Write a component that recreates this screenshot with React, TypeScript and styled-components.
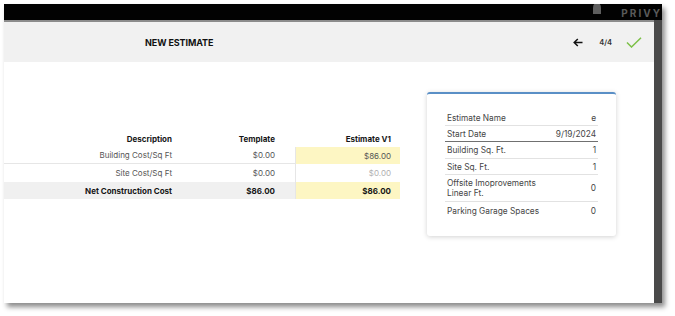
import React from "react";
import styled, { createGlobalStyle } from "styled-components";

const GlobalStyle = createGlobalStyle`
  body {
    margin: 0;
    background: #ffffff;
    font-family: "Inter", "Liberation Sans", sans-serif;
  }
`;

const Page = styled.div`
  padding: 4px 0 0 4px;
  width: 675px;
  height: 316px;
  box-sizing: border-box;
`;

const Frame = styled.div`
  width: 658px;
  height: 299px;
  display: flex;
  flex-direction: column;
  overflow: hidden;
  background: #ffffff;
  box-shadow: 3px 4px 5px rgba(0, 0, 0, 0.45);
`;

const TopBar = styled.div`
  height: 16px;
  flex-shrink: 0;
  background: #020202;
  display: flex;
  align-items: flex-start;
  justify-content: flex-end;
  gap: 19px;
  overflow: hidden;
`;

const Brand = styled.span`
  font-size: 10px;
  font-weight: 700;
  letter-spacing: 2px;
  color: #5a5a5a;
  line-height: 16px;
  margin-top: 1px;
`;

const Main = styled.div`
  flex: 1;
  display: flex;
  min-height: 0;
`;

const Content = styled.div`
  flex: 1;
  display: flex;
  flex-direction: column;
  border-top: 2px solid #8c8c8c;
`;

const ScrollStrip = styled.div`
  width: 8px;
  background: #4a4a4a;
`;

const Header = styled.div`
  height: 40px;
  background: #f1f1f1;
  display: flex;
  align-items: center;
  padding: 0 12px 0 141px;
`;

const Title = styled.span`
  font-size: 9px;
  font-weight: 700;
  color: #111;
  letter-spacing: -0.1px;
`;

const Controls = styled.div`
  margin-left: auto;
  display: flex;
  align-items: center;
  gap: 14px;
`;

const Step = styled.span`
  font-size: 7.5px;
  font-weight: 600;
  color: #333;
  margin-left: 2px;
`;

const Body = styled.div`
  flex: 1;
  display: flex;
  align-items: flex-start;
  padding-top: 30px;
`;

const Table = styled.div`
  width: 396px;
  margin-top: 38px;
  display: grid;
  grid-template-columns: 180px 111px 105px;
`;

type CellProps = {
  $bold?: boolean;
  $bg?: string;
  $pad: number;
  $h: number;
  $color?: string;
  $line?: boolean;
  $left?: boolean;
};

const Cell = styled.div<CellProps>`
  height: ${({ $h }) => $h}px;
  box-sizing: border-box;
  display: flex;
  align-items: center;
  justify-content: flex-end;
  padding-right: ${({ $pad }) => $pad}px;
  font-size: 8px;
  font-weight: ${({ $bold }) => ($bold ? 700 : 400)};
  color: ${({ $color, $bold }) => $color || ($bold ? "#161616" : "#555")};
  background: ${({ $bg }) => $bg || "transparent"};
  border-bottom: ${({ $line }) => ($line ? "1px solid #e6e6e6" : "0")};
  border-left: ${({ $left }) => ($left ? "1px solid #e6e6e6" : "0")};
`;

const Card = styled.div`
  width: 189px;
  margin-left: 27px;
  box-sizing: border-box;
  background: #fff;
  border-top: 2px solid #5a8fc6;
  border-radius: 3px;
  box-shadow: 0 1px 5px rgba(0, 0, 0, 0.18);
  padding: 16px 18px 17px 18px;
`;

const InfoRow = styled.div<{ $h: number; $strong?: boolean; $last?: boolean }>`
  height: ${({ $h }) => $h}px;
  box-sizing: border-box;
  display: flex;
  align-items: center;
  justify-content: space-between;
  padding: 0 2px;
  font-size: 8.3px;
  color: #454545;
  line-height: 10px;
  border-bottom: ${({ $last, $strong }) =>
    $last ? "0" : $strong ? "1px solid #707070" : "1px solid #e2e2e2"};
`;

const Label = styled.span`
  max-width: 100px;
`;

const YELLOW = "#fdf6c3";
const GRAY = "#f0f0f0";

const info = [
  { label: "Estimate Name", value: "e", h: 16 },
  { label: "Start Date", value: "9/19/2024", h: 16, strong: true },
  { label: "Building Sq. Ft.", value: "1", h: 17 },
  { label: "Site Sq. Ft.", value: "1", h: 16 },
  { label: "Offsite Imoprovements Linear Ft.", value: "0", h: 27 },
  { label: "Parking Garage Spaces", value: "0", h: 17, last: true },
];

const App = () => {
  return (
    <Page>
      <GlobalStyle />
      <Frame>
        <TopBar>
          <svg width="10" height="10" viewBox="0 0 10 10">
            <path d="M1 10 V4 Q1 -1 5 -1 Q9 -1 9 4 V10 Z" fill="#5e5e5e" />
          </svg>
          <Brand>PRIVY</Brand>
        </TopBar>
        <Main>
          <Content>
            <Header>
              <Title>NEW ESTIMATE</Title>
              <Controls>
                <svg width="10" height="9" viewBox="0 0 10 9">
                  <path
                    d="M9.5 4.5 H1.5 M4.8 1 L1.2 4.5 L4.8 8"
                    stroke="#111"
                    strokeWidth="1.5"
                    fill="none"
                  />
                </svg>
                <Step>4/4</Step>
                <svg width="16" height="11" viewBox="0 0 16 11">
                  <path
                    d="M1 5.5 L5.5 10 L15 0.8"
                    stroke="#7cc047"
                    strokeWidth="1.5"
                    fill="none"
                  />
                </svg>
              </Controls>
            </Header>
            <Body>
              <Table>
                <Cell $h={17} $pad={12} $bold>Description</Cell>
                <Cell $h={17} $pad={20} $bold>Template</Cell>
                <Cell $h={17} $pad={9} $bold>Estimate V1</Cell>

                <Cell $h={17} $pad={12} $line>Building Cost/Sq Ft</Cell>
                <Cell $h={17} $pad={20} $line>$0.00</Cell>
                <Cell $h={17} $pad={9} $bg={YELLOW} $left>$86.00</Cell>

                <Cell $h={18} $pad={12}>Site Cost/Sq Ft</Cell>
                <Cell $h={18} $pad={20}>$0.00</Cell>
                <Cell $h={18} $pad={9} $color="#b0b0b0" $left>$0.00</Cell>

                <Cell $h={17} $pad={12} $bold $bg={GRAY}>Net Construction Cost</Cell>
                <Cell $h={17} $pad={20} $bold $bg={GRAY}>$86.00</Cell>
                <Cell $h={17} $pad={9} $bold $bg={YELLOW} $left>$86.00</Cell>
              </Table>
              <Card>
                {info.map((row) => (
                  <InfoRow key={row.label} $h={row.h} $strong={row.strong} $last={row.last}>
                    <Label>{row.label}</Label>
                    <span>{row.value}</span>
                  </InfoRow>
                ))}
              </Card>
            </Body>
          </Content>
          <ScrollStrip />
        </Main>
      </Frame>
    </Page>
  );
};

export default App;
